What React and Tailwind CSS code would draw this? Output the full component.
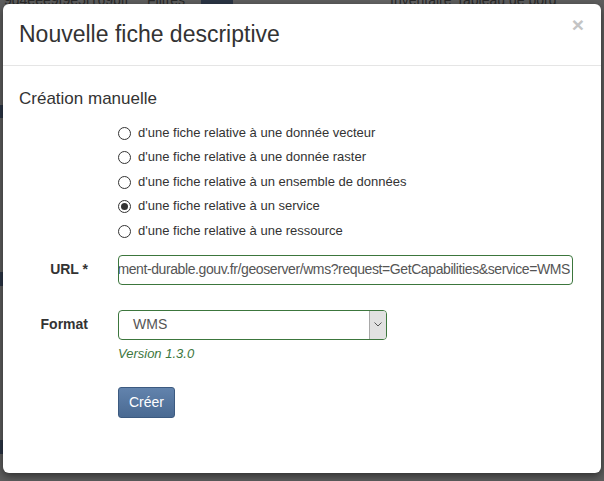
const options = [
  "d'une fiche relative à une donnée vecteur",
  "d'une fiche relative à une donnée raster",
  "d'une fiche relative à un ensemble de données",
  "d'une fiche relative à un service",
  "d'une fiche relative à une ressource",
];

const Radio = ({ checked }) => (
  <span className="w-[13px] h-[13px] rounded-full border border-[#333] bg-white flex items-center justify-center shrink-0">
    {checked && <span className="w-[7px] h-[7px] rounded-full bg-[#333]" />}
  </span>
);

const App = () => {
  return (
    <div className="relative w-[604px] h-[481px] overflow-hidden bg-[#5e5e5e] font-['Liberation_Sans',Arial,sans-serif] text-[#333]">
      {/* page behind the overlay */}
      <div className="h-[4px] flex text-[14px] text-[#2a2a2a] leading-[8px] overflow-hidden">
        <div className="w-[110px] px-1 -mt-[4px]">9d4eee9f9e5f169bff</div>
        <div className="w-[60px] border-l border-[#4a4a4a] pl-9 -mt-[4px]">Filtres ▾</div>
        <div className="w-[200px] flex">
          <div className="ml-[31px] w-[32px] bg-[#2b3545]" />
        </div>
        <div className="w-[70px] bg-[#666] pl-[20px] -mt-[4px]">Inventaire</div>
        <div className="flex-1 pl-[16px] -mt-[4px]">Tableau de bord</div>
      </div>
      <div className="absolute left-0 top-[105px] w-[3px] h-[13px] bg-[#2b3545]" />
      <div className="absolute left-0 top-[272px] w-[3px] h-[14px] bg-[#2b3545]" />
      <div className="absolute left-0 top-[440px] w-[3px] h-[14px] bg-[#2b3545]" />

      {/* modal */}
      <div className="absolute left-[3px] top-[4px] w-[598px] h-[469px] bg-white rounded-[6px] shadow-[0_3px_9px_rgba(0,0,0,0.5)]">
        <div className="h-[62px] border-b border-[#e5e5e5] flex items-start justify-between pl-[16px] pr-[15px]">
          <h4 className="text-[23px] leading-[26px] mt-[17px] text-[#333]">Nouvelle fiche descriptive</h4>
          <button className="text-[21px] font-bold leading-none mt-[10px] mr-[2px] text-[#c4c4c4]">×</button>
        </div>

        <div className="px-[16px] pt-[23px]">
          <h3 className="text-[17px] leading-[20px]">Création manuelle</h3>

          <div className="mt-[16px] ml-[99px] flex flex-col gap-[7.9px]">
            {options.map((o, i) => (
              <label key={o} className="flex items-center gap-[7px] text-[13px] leading-[16.6px] h-[16.6px]">
                <Radio checked={i === 3} />
                <span>{o}</span>
              </label>
            ))}
          </div>

          <div className="flex items-center mt-[15px]">
            <label className="w-[69px] text-right text-[14px] font-bold">URL *</label>
            <div className="ml-[30px] w-[455px] h-[30px] border border-[#3c763d] rounded-[4px] flex items-center justify-end overflow-hidden px-[2px] text-[14px] tracking-[-0.4px] text-[#555]">
              <span className="whitespace-nowrap">http://geoserveur.developpement-durable.gouv.fr/geoserver/wms?request=GetCapabilities&service=WMS</span>
            </div>
          </div>

          <div className="flex items-center mt-[25px]">
            <label className="w-[69px] text-right text-[14px] font-bold">Format</label>
            <div className="ml-[30px] w-[269px] h-[30px] border border-[#3c763d] rounded-[4px] flex items-stretch overflow-hidden">
              <div className="flex-1 flex items-center pl-[14px] text-[14px] text-[#555]">WMS</div>
              <div className="w-[17px] bg-[#e1e1e1] border-l border-[#a8a8a8] flex items-center justify-center">
                <svg width="8" height="5" viewBox="0 0 8 5">
                  <path d="M0.5 0.5 L4 4 L7.5 0.5" fill="none" stroke="#555" strokeWidth="1" />
                </svg>
              </div>
            </div>
          </div>
          <div className="ml-[99px] mt-[4px] text-[13px] italic text-[#3c763d]">Version 1.3.0</div>

          <button className="ml-[99px] mt-[24px] w-[57px] h-[31px] rounded-[3px] border border-[#3c5a80] bg-gradient-to-b from-[#6283ad] to-[#4a6a92] text-white text-[14px]">
            Créer
          </button>
        </div>
      </div>
    </div>
  );
};

export default App;
